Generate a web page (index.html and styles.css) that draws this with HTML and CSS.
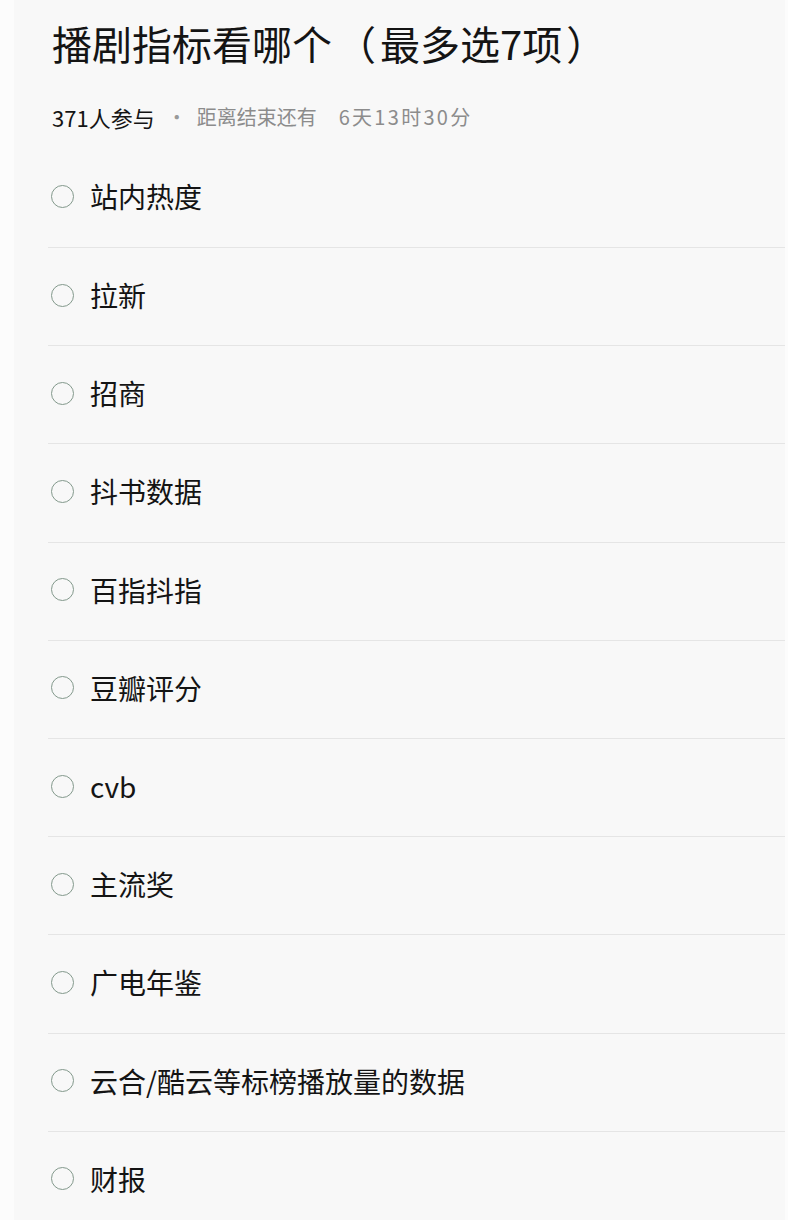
FILE: index.html
```html
<!DOCTYPE html>
<html lang="zh-CN">
<head>
  <meta charset="UTF-8" />
  <title>投票</title>
  <meta name="viewport" content="width=device-width, initial-scale=1.0"/>
  <link rel="stylesheet" href="styles.css">
</head>
<body>

  <div class="poll">
    <h1 class="title">播剧指标看哪个<span class="paren">（</span>最多选7项<span class="paren">）</span></h1>
    <div class="meta">
      <span class="count">371人参与</span>
      <span class="dot">·</span>
      <span class="remain">距离结束还有<span class="time">6天13时30分</span></span>
    </div>

    <!-- OPTIONS -->
    <ul class="options">
      <li class="option"><span class="radio"></span>站内热度</li>
      <li class="option"><span class="radio"></span>拉新</li>
      <li class="option"><span class="radio"></span>招商</li>
      <li class="option"><span class="radio"></span>抖书数据</li>
      <li class="option"><span class="radio"></span>百指抖指</li>
      <li class="option"><span class="radio"></span>豆瓣评分</li>
      <li class="option"><span class="radio"></span>cvb</li>
      <li class="option"><span class="radio"></span>主流奖</li>
      <li class="option"><span class="radio"></span>广电年鉴</li>
      <li class="option"><span class="radio"></span>云合/酷云等标榜播放量的数据</li>
      <li class="option"><span class="radio"></span>财报</li>
    </ul>
  </div>

</body>
</html>
```

FILE: styles.css
```css
body {
  margin: 0;
  background: #fcfcfc;
  font-family: 'Noto Sans CJK SC', 'Noto Sans', sans-serif;
  color: #141414;
  overflow: hidden;
}

.poll {
  margin: 0 3px 0 14px;
  padding: 17px 0 0 34px;
  background: #f8f8f8;
  min-height: 1220px;
}

.title {
  margin: 0 0 0 4px;
  font-size: 40px;
  line-height: 52px;
  font-weight: 400;
}

.paren {
  font-family: 'Noto Sans CJK TC', 'Noto Sans CJK SC', sans-serif;
  margin: 0 4px;
}

.meta {
  margin: 33px 0 0 4px;
  display: flex;
  align-items: center;
  line-height: 30px;
}

.count {
  font-size: 22px;
}

.dot {
  font-size: 20px;
  color: #999;
  margin: 0 10px 0 12px;
}

.remain {
  font-size: 20px;
  color: #8c8c8c;
}

.time {
  margin-left: 22px;
  letter-spacing: 2.3px;
}

.options {
  list-style: none;
  margin: 16px 0 0;
  padding: 0;
}

.option {
  display: flex;
  align-items: center;
  box-sizing: border-box;
  height: 98.2px;
  padding: 0 0 3px 3px;
  border-bottom: 1px solid #e5e5e5;
  font-size: 28px;
}

.option:first-child {
  height: 100px;
}

.radio {
  width: 21px;
  height: 21px;
  border: 1px solid #83998c;
  border-radius: 50%;
  margin-right: 16px;
  flex-shrink: 0;
}
```
